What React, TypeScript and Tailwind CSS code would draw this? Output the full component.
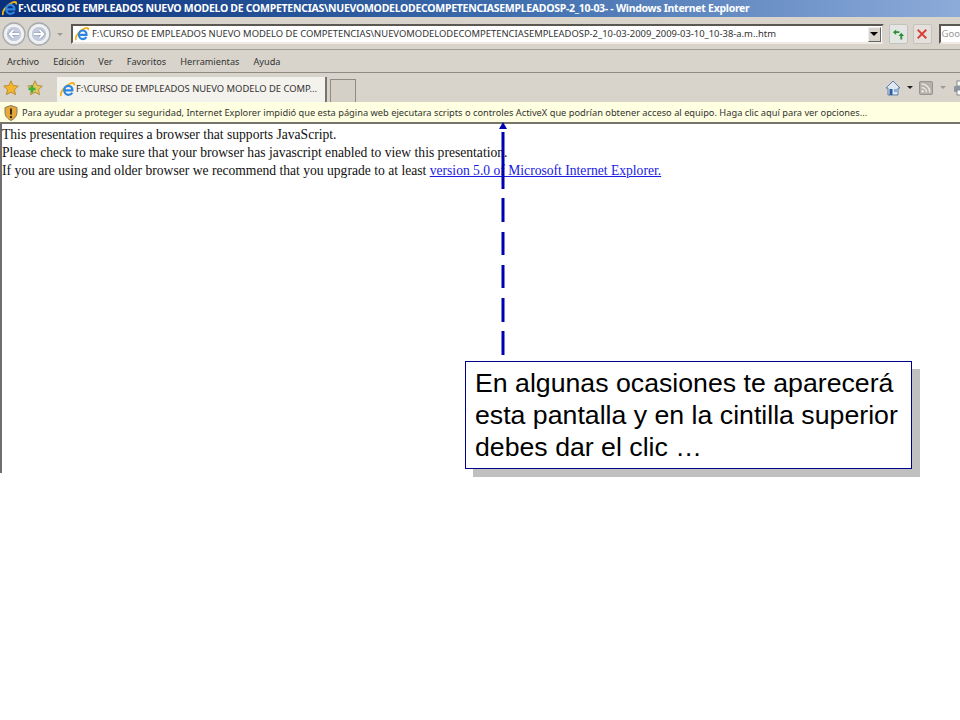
const chromeFont = "[font-family:'Noto_Sans',sans-serif]";

function IeLogo({ className }: { className: string }) {
  return (
    <svg viewBox="0 0 16 16" className={className}>
      <path d="M1.200 15C-.5 12 4 4.500 11 1.600c3-1.200 4.700-.4 4 2" fill="none" stroke="#efb21f" strokeWidth="2" />
      <path d="M4.800 9h8.400c.2-3-1.800-5-4.300-5S4.500 6 4.500 8.800s2 5 4.500 5c1.800 0 3.200-.8 4-2.300" fill="none" stroke="#2a86e0" strokeWidth="2.400" />
    </svg>
  );
}

function NavButton({ dir }: { dir: "left" | "right" }) {
  return (
    <svg viewBox="0 0 24 24" className="w-[24px] h-[24px]">
      <circle cx="12" cy="12" r="11" fill="#eceded" stroke="#a6a9b0" strokeWidth="1.300" />
      <circle cx="12" cy="12" r="8" fill="#c3cbdc" stroke="#f6f6f6" strokeWidth="1.300" />
      <path
        d={dir === "left" ? "M17 12H8M11.500 8l-4 4 4 4" : "M7 12H16M12.500 8l4 4-4 4"}
        fill="none"
        stroke="#8e9ab4"
        strokeWidth="3.200"
      />
      <path
        d={dir === "left" ? "M17 12H8M11.500 8l-4 4 4 4" : "M7 12H16M12.500 8l4 4-4 4"}
        fill="none"
        stroke="#fff"
        strokeWidth="1.800"
      />
    </svg>
  );
}

function Star({ plus }: { plus?: boolean }) {
  return (
    <svg viewBox="0 0 16 16" className="w-[16px] h-[16px]">
      <path
        d="M8 .8l2.200 4.700 5.100.6-3.800 3.500 1 5.100L8 12.200l-4.500 2.500 1-5.100L.7 6.100l5.100-.6z"
        fill={plus ? "#e9c65a" : "#f6b62c"}
        stroke="#a9802c"
        strokeWidth="0.8"
      />
      {plus && <path d="M5 5.500v7M1.500 9h7" stroke="#3fae3c" strokeWidth="2.600" />}
    </svg>
  );
}

function Caret({ light }: { light?: boolean }) {
  return <div className={`w-0 h-0 border-x-[3px] border-x-transparent border-t-[3px] ${light ? "border-t-[#9a9a9a]" : "border-t-[#222]"}`} />;
}

export default function App() {
  return (
    <div className="relative w-[960px] h-[720px] bg-white overflow-hidden">
      <div className="h-[473px] flex flex-col">
        {/* title bar */}
        <div className="h-[17px] flex items-center pl-[2px] gap-[1px] bg-gradient-to-r from-[#0a2f7a] via-[#3a6aab] to-[#8dabd9]">
          <IeLogo className="w-[15px] h-[15px] shrink-0" />
          <span className={`${chromeFont} text-[10.5px] font-bold text-white whitespace-nowrap tracking-[-0.28px]`}>
            F:\CURSO DE EMPLEADOS NUEVO MODELO DE COMPETENCIAS\NUEVOMODELODECOMPETENCIASEMPLEADOSP-2_10-03- - Windows Internet Explorer
          </span>
        </div>

        {/* address row */}
        <div className="h-[33px] flex items-center bg-[#d8d4cb] border-b border-[#a09c92] pl-[2px] pt-[2px]">
          <NavButton dir="left" />
          <div className="ml-[1px]">
            <NavButton dir="right" />
          </div>
          <div className="ml-[6px]">
            <Caret light />
          </div>
          <div className="ml-[8px] w-[813px] h-[20px] flex items-center bg-white border-2 border-[#5a5850] border-r-[#d8d4cb] border-b-[#eeeae2] pl-[2px] pr-[1px]">
            <IeLogo className="w-[14px] h-[14px] shrink-0" />
            <span className={`${chromeFont} ml-[3px] flex-1 text-[9.42px] text-[#333] whitespace-nowrap`}>
              F:\CURSO DE EMPLEADOS NUEVO MODELO DE COMPETENCIAS\NUEVOMODELODECOMPETENCIASEMPLEADOSP-2_10-03-2009_2009-03-10_10-38-a.m..htm
            </span>
            <div className="w-[13px] h-[15px] flex items-center justify-center bg-[#d8d4cb] border border-[#eee] border-r-[#666] border-b-[#666] shrink-0">
              <div className="w-0 h-0 border-x-[4px] border-x-transparent border-t-[4px] border-t-black" />
            </div>
          </div>
          <div className="ml-[5px] w-[19px] h-[20px] flex items-center justify-center bg-[#e4e6e4] border border-[#c4c2ba] rounded-[2px]">
            <svg viewBox="0 0 14 14" className="w-[13px] h-[13px]">
              <path d="M1 4.500L4.500 1.500v2h3.500v2H4.500v2z" fill="#2e8f35" />
              <path d="M10 5l3 3.500h-2v4H9v-4H7z" fill="#2e8f35" />
            </svg>
          </div>
          <div className="ml-[5px] w-[19px] h-[20px] flex items-center justify-center bg-[#e4e0dc] border border-[#c4c2ba] rounded-[2px]">
            <svg viewBox="0 0 14 14" className="w-[12px] h-[12px]">
              <path d="M2 2l10 10M12 2L2 12" stroke="#d8403a" strokeWidth="2.200" />
            </svg>
          </div>
          <div className="ml-[7px] flex-1 h-[20px] flex items-center bg-white border-2 border-[#5a5850] border-r-0 border-b-[#eeeae2] pl-[1px]">
            <span className={`${chromeFont} text-[9.5px] text-[#999]`}>Goo</span>
          </div>
        </div>

        {/* menu row */}
        <div className={`${chromeFont} h-[23px] flex items-center gap-[14px] pl-[7px] pt-[2px] bg-[#d8d4cb] border-b border-[#8e8b82] text-[9.2px] text-[#333]`}>
          <span>Archivo</span>
          <span>Edición</span>
          <span>Ver</span>
          <span>Favoritos</span>
          <span>Herramientas</span>
          <span>Ayuda</span>
        </div>

        {/* tab row */}
        <div className="h-[29px] flex items-end bg-[#d8d4cb] pl-[3px] overflow-hidden">
          <div className="self-center flex gap-[8px] shrink-0">
            <Star />
            <Star plus />
          </div>
          <div className="ml-[14px] w-[270px] h-[25px] flex items-center pl-[3px] bg-[#f4f2ec] border-r-2 border-[#77746c] shrink-0">
            <IeLogo className="w-[15px] h-[15px] shrink-0" />
            <span className={`${chromeFont} ml-[1px] text-[9.4px] text-[#333] whitespace-nowrap`}>
              F:\CURSO DE EMPLEADOS NUEVO MODELO DE COMP...
            </span>
          </div>
          <div className="ml-[3px] w-[26px] h-[23px] bg-[#d4d0c8] border border-b-0 border-[#8e8b82] shrink-0" />
          <div className="ml-[529px] self-center flex items-center shrink-0">
            <svg viewBox="0 0 16 16" className="w-[16px] h-[16px]">
              <path d="M1 8l7-7 7 7h-2v7H3V8z" fill="#dfe7f0" stroke="#5f7fa8" />
              <rect x="4.500" y="9" width="3" height="6" fill="#2a5ea8" />
              <rect x="9" y="9" width="3" height="3" fill="#7fb0e0" />
            </svg>
            <div className="ml-[6px]">
              <Caret />
            </div>
            <svg viewBox="0 0 16 16" className="ml-[6px] w-[14px] h-[14px]">
              <rect x="0.500" y="0.500" width="15" height="15" rx="1.500" fill="#b4b2aa" stroke="#8d8b84" />
              <path d="M3 3.500a9.500 9.500 0 0 1 9.500 9.500M3 7.500a5.500 5.500 0 0 1 5.500 5.500" fill="none" stroke="#eceae4" strokeWidth="1.600" />
              <circle cx="4.200" cy="11.800" r="1.400" fill="#eceae4" />
            </svg>
            <div className="ml-[7px]">
              <Caret light />
            </div>
            <svg viewBox="0 0 16 16" className="ml-[7px] w-[16px] h-[16px] shrink-0">
              <rect x="4" y="1" width="8" height="5" fill="#fff" stroke="#888" />
              <rect x="1" y="6" width="14" height="6" rx="1" fill="#8d97a3" />
              <rect x="4" y="10" width="8" height="5" fill="#fff" stroke="#888" />
            </svg>
          </div>
        </div>

        {/* information bar */}
        <div className="h-[22px] flex items-center pl-[4px] pt-[1px] bg-[#ffffe1] border-b-2 border-[#77746c]">
          <svg viewBox="0 0 14 16" className="w-[14px] h-[16px] shrink-0">
            <path d="M7 .5l6 2v5c0 4-3 6.500-6 8-3-1.500-6-4-6-8v-5z" fill="#e8a93c" stroke="#8a7a58" />
            <path d="M7 3.500v6" stroke="#3a2a10" strokeWidth="2" />
            <circle cx="7" cy="12" r="1.200" fill="#3a2a10" />
          </svg>
          <span className={`${chromeFont} ml-[4px] text-[9.28px] text-[#333] whitespace-nowrap`}>
            Para ayudar a proteger su seguridad, Internet Explorer impidió que esta página web ejecutara scripts o controles ActiveX que podrían obtener acceso al equipo. Haga clic aquí para ver opciones...
          </span>
        </div>

        {/* page content */}
        <div className="flex-1 border-l-2 border-[#6e6e6e] pt-[2px] text-[13.6px] leading-[18px] text-[#111] font-['Liberation_Serif',serif]">
          <p>This presentation requires a browser that supports JavaScript.</p>
          <p>Please check to make sure that your browser has javascript enabled to view this presentation.</p>
          <p>
            If you are using and older browser we recommend that you upgrade to at least{" "}
            <a className="text-[#1a1ae0] underline">version 5.0 of Microsoft Internet Explorer.</a>
          </p>
        </div>
      </div>

      {/* dashed pointer */}
      <svg viewBox="0 0 10 235" className="absolute left-[498px] top-[122px] w-[10px] h-[235px]">
        <path d="M5 0l4 7H1z" fill="#0000b0" />
        <path d="M5 10v57M5 76v24M5 110v23M5 143v23M5 176v24M5 209v24" stroke="#0000b0" strokeWidth="3" />
      </svg>

      {/* callout */}
      <div className="absolute left-[465px] top-[361px] w-[447px] h-[108px] pl-[9px] pt-[5px] bg-white border border-[#000090] shadow-[8px_8px_0_#c0c0c0] text-[26.7px] leading-[32px] text-black font-['Liberation_Sans',sans-serif]">
        En algunas ocasiones te aparecerá
        <br />
        esta pantalla y en la cintilla superior
        <br />
        debes dar el clic …
      </div>
    </div>
  );
}
